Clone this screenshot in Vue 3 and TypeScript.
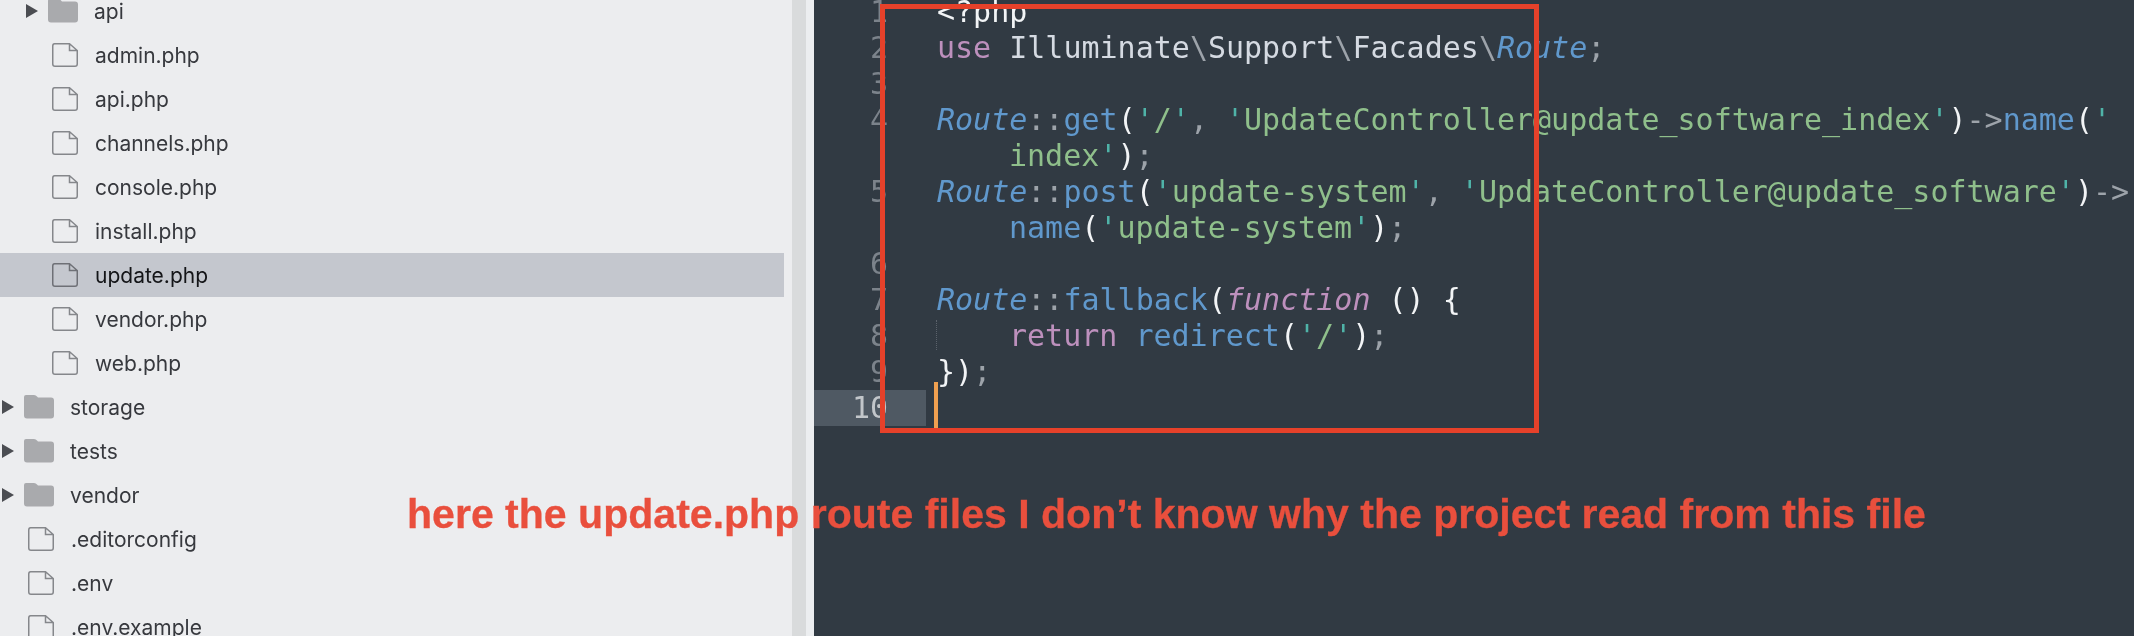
<script setup lang="ts">
interface Row { name: string; kind: 'file' | 'folder'; depth: number; selected?: boolean }
const rows: Row[] = [
  { name: 'api', kind: 'folder', depth: 1 },
  { name: 'admin.php', kind: 'file', depth: 1 },
  { name: 'api.php', kind: 'file', depth: 1 },
  { name: 'channels.php', kind: 'file', depth: 1 },
  { name: 'console.php', kind: 'file', depth: 1 },
  { name: 'install.php', kind: 'file', depth: 1 },
  { name: 'update.php', kind: 'file', depth: 1, selected: true },
  { name: 'vendor.php', kind: 'file', depth: 1 },
  { name: 'web.php', kind: 'file', depth: 1 },
  { name: 'storage', kind: 'folder', depth: 0 },
  { name: 'tests', kind: 'folder', depth: 0 },
  { name: 'vendor', kind: 'folder', depth: 0 },
  { name: '.editorconfig', kind: 'file', depth: 0 },
  { name: '.env', kind: 'file', depth: 0 },
  { name: '.env.example', kind: 'file', depth: 0 },
]
</script>

<template>
  <div class="page">
    <aside class="sidebar">
      <div
        v-for="row in rows"
        :key="row.name + row.depth"
        class="row"
        :class="[row.depth ? 'nested' : 'root', { selected: row.selected }]"
      >
        <svg v-if="row.kind === 'folder'" class="arrow" width="12" height="14" viewBox="0 0 12 14">
          <path d="M0 0 L12 7 L0 14 Z" fill="#4b4d52" />
        </svg>
        <svg v-if="row.kind === 'folder'" class="folder" width="30" height="24" viewBox="0 0 30 24">
          <path d="M2 0 H10 Q12 0 13 1.5 L14 2.5 H27 Q30 2.5 30 5.5 V20.5 Q30 23.5 27 23.5 H3 Q0 23.5 0 20.5 V2 Q0 0 2 0 Z" fill="#a9aaad" />
        </svg>
        <svg v-else class="file" width="26" height="24" viewBox="0 0 26 24">
          <path d="M2.5 0.75 H17.5 L25.25 7.5 V21 Q25.25 23.25 23 23.25 H3 Q0.75 23.25 0.75 21 V3 Q0.75 0.75 2.5 0.75 Z M17.5 0.75 V7.5 H25.25" fill="none" :stroke="row.selected ? '#6e7076' : '#85878b'" stroke-width="1.5" />
        </svg>
        <span class="label">{{ row.name }}</span>
      </div>
    </aside>
    <div class="scroll-track"></div>
    <div class="scroll-edge"></div>
    <main class="editor">
      <div class="line"><span class="num">1</span><code class="code"><span class="w">&lt;?php</span></code></div>
      <div class="line"><span class="num">2</span><code class="code"><span class="k">use</span> <span class="ns">Illuminate</span><span class="g">\</span><span class="ns">Support</span><span class="g">\</span><span class="ns">Facades</span><span class="g">\</span><span class="b i">Route</span><span class="g">;</span></code></div>
      <div class="line"><span class="num">3</span><code class="code"></code></div>
      <div class="line"><span class="num">4</span><code class="code"><span class="b i">Route</span><span class="g">::</span><span class="b">get</span><span class="w">(</span><span class="q">'</span><span class="s">/</span><span class="q">'</span><span class="g">,</span> <span class="q">'</span><span class="s">UpdateController@update_software_index</span><span class="q">'</span><span class="w">)</span><span class="g">-&gt;</span><span class="b">name</span><span class="w">(</span><span class="q">'</span></code></div>
      <div class="line"><span class="num"></span><code class="code indent"><span class="s">index</span><span class="q">'</span><span class="w">)</span><span class="g">;</span></code></div>
      <div class="line"><span class="num">5</span><code class="code"><span class="b i">Route</span><span class="g">::</span><span class="b">post</span><span class="w">(</span><span class="q">'</span><span class="s">update-system</span><span class="q">'</span><span class="g">,</span> <span class="q">'</span><span class="s">UpdateController@update_software</span><span class="q">'</span><span class="w">)</span><span class="g">-&gt;</span></code></div>
      <div class="line"><span class="num"></span><code class="code indent"><span class="b">name</span><span class="w">(</span><span class="q">'</span><span class="s">update-system</span><span class="q">'</span><span class="w">)</span><span class="g">;</span></code></div>
      <div class="line"><span class="num">6</span><code class="code"></code></div>
      <div class="line"><span class="num">7</span><code class="code"><span class="b i">Route</span><span class="g">::</span><span class="b">fallback</span><span class="w">(</span><span class="k i">function</span> <span class="w">()</span> <span class="w">{</span></code></div>
      <div class="line guide"><span class="num">8</span><code class="code indent"><span class="k">return</span> <span class="b">redirect</span><span class="w">(</span><span class="q">'</span><span class="s">/</span><span class="q">'</span><span class="w">)</span><span class="g">;</span></code></div>
      <div class="line"><span class="num">9</span><code class="code"><span class="w">})</span><span class="g">;</span></code></div>
      <div class="line current"><span class="num">10</span><code class="code"></code></div>
      <div class="caret"></div>
    </main>
    <div class="callout-box"></div>
    <p class="callout-text">here the update.php route files I don’t know why the project read from this file</p>
  </div>
</template>

<style>
html, body { margin: 0; background: #313a43; }
</style>

<style scoped>
.page {
  position: relative;
  display: flex;
  width: 2134px;
  height: 636px;
  overflow: hidden;
  filter: blur(0.4px);
}
.sidebar {
  flex: none;
  width: 792px;
  background: #ecedef;
  font-family: Inter, "Liberation Sans", sans-serif;
  font-size: 21px;
  color: #37393e;
}
.row {
  display: flex;
  align-items: center;
  width: 784px;
  height: 44px;
  box-sizing: border-box;
}
.row:first-child { margin-top: -11px; }
.row.selected { background: #c4c7ce; color: #141518; }
.row.nested { padding-left: 52px; }
.row.root { padding-left: 28px; }
.arrow { flex: none; margin-left: -26px; margin-right: 12px; }
.folder { flex: none; margin-left: -2px; margin-right: 16px; }
.file { flex: none; margin-right: 17px; }
.label { white-space: pre; }
.scroll-track { flex: none; width: 14px; background: #d9dbdc; }
.scroll-edge { flex: none; width: 8px; background: #eceef0; }
.editor {
  position: relative;
  flex: 1;
  min-width: 0;
  background: #313a43;
  font-family: "DejaVu Sans Mono", monospace;
  font-size: 30px;
}
.line {
  display: flex;
  height: 36.05px;
  line-height: 36.05px;
  white-space: pre;
}
.line:first-child { margin-top: -6.5px; }
.num {
  flex: none;
  width: 112px;
  box-sizing: border-box;
  padding-right: 38px;
  text-align: right;
  color: #7c838b;
}
.code {
  font: inherit;
  padding-left: 11px;
  color: #d5dae2;
}
.code.indent { padding-left: 83px; }
.current .num { background: #4f5963; color: #c2c6ca; }
.guide { position: relative; }
.guide::before {
  content: "";
  position: absolute;
  left: 122px;
  top: 2px;
  height: 30px;
  border-left: 1px dotted #5b626b;
}
.caret {
  position: absolute;
  left: 120px;
  top: 382px;
  width: 4px;
  height: 51px;
  background: #f0a050;
}
.w { color: #f2f4f6; }
.g { color: #9da3aa; }
.k { color: #bd90bd; }
.b { color: #6098cc; }
.s { color: #8fbf8b; }
.q { color: #4fb3a8; }
.ns { color: #d5dae2; }
.i { font-style: italic; }
.callout-box {
  position: absolute;
  left: 880px;
  top: 4px;
  width: 659px;
  height: 429px;
  box-sizing: border-box;
  border: 5px solid #e6412a;
}
.callout-text {
  position: absolute;
  left: 407px;
  top: 492px;
  margin: 0;
  white-space: nowrap;
  font-family: "Liberation Sans", Arial, sans-serif;
  font-weight: 700;
  font-size: 41.05px;
  line-height: 44px;
  color: #e94f3d;
  -webkit-text-stroke: 0.3px #e94f3d;
}
</style>
